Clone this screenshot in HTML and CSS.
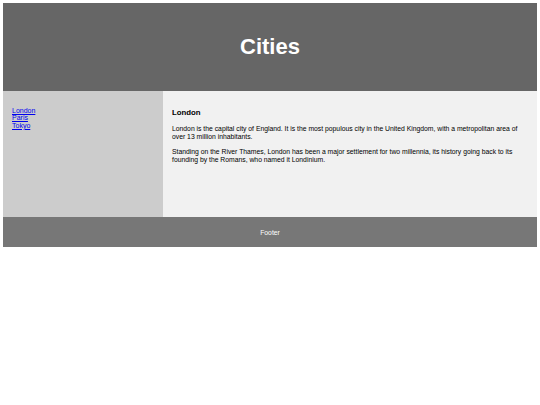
FILE: index.html
```html
<!DOCTYPE html>
<html>
<head>
<meta charset="utf-8">
<link rel="stylesheet" href="styles.css">
</head>
<body>
<header class="header"><h2 class="title">Cities</h2></header>
<section class="section">
  <nav class="nav">
    <ul class="links">
      <li><a href="#">London</a></li>
      <li><a href="#">Paris</a></li>
      <li><a href="#">Tokyo</a></li>
    </ul>
  </nav>
  <article class="article">
    <h1 class="heading">London</h1>
    <p class="para">London is the capital city of England. It is the most populous city in the United Kingdom, with a metropolitan area of over 13 million inhabitants.</p>
    <p class="para">Standing on the River Thames, London has been a major settlement for two millennia, its history going back to its founding by the Romans, who named it Londinium.</p>
  </article>
</section>
<footer class="footer"><p class="foot-text">Footer</p></footer>
</body>
</html>
```
FILE: styles.css
```css
* { box-sizing: border-box; }
body {
  margin: 3px;
  font-family: "Liberation Sans", Arial, sans-serif;
  font-size: 6.8px;
  line-height: 7.8px;
}
.header {
  background: #666666;
  height: 88px;
  display: flex;
  align-items: center;
  justify-content: center;
}
.title {
  margin: 0;
  color: #ffffff;
  font-size: 22px;
  line-height: 26px;
  font-weight: bold;
}
.section {
  display: flex;
  height: 126px;
}
.nav {
  width: 160px;
  flex: none;
  background: #cccccc;
  padding: 15.5px 9px 9px;
}
.links {
  list-style: none;
  margin: 0;
  padding: 0;
  font-size: 7px;
  line-height: 7.6px;
}
.links a { color: #0000ee; }
.article {
  flex: 1;
  background: #f1f1f1;
  padding: 9px;
}
.heading {
  margin: 8px 0 8px;
  font-size: 7.8px;
  line-height: 9px;
  font-weight: bold;
}
.para {
  margin: 0 0 7.5px;
}
.footer {
  background: #777777;
  height: 30px;
  display: flex;
  align-items: center;
  justify-content: center;
  color: #ffffff;
  padding-top: 1px;
}
.foot-text { margin: 0; }
```
